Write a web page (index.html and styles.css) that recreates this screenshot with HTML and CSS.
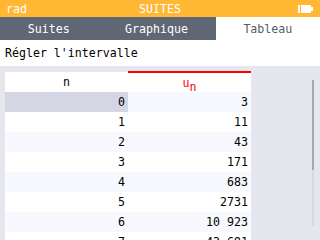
FILE: index.html
```html
<!DOCTYPE html>
<html lang="fr">
<head>
  <meta charset="UTF-8">
  <title>Suites</title>
  <link rel="stylesheet" href="styles.css">
</head>
<body>

  <div class="titlebar">
    <span class="angle">rad</span>
    <span class="apptitle">SUITES</span>
    <svg class="battery" width="16" height="8" viewBox="0 0 16 8">
      <rect x="0" y="0" width="2" height="8" fill="#fff"/>
      <rect x="3" y="0" width="10" height="8" fill="#fff"/>
      <rect x="13" y="2" width="2" height="4" fill="#fff"/>
    </svg>
  </div>

  <div class="tabs">
    <div class="tab">Suites</div>
    <div class="tab">Graphique</div>
    <div class="tab active">Tableau</div>
  </div>

  <div class="interval">Régler l'intervalle</div>

  <div class="wall">
    <table class="values">
      <tr class="head">
        <th>n</th>
        <th class="seq">u<sub>n</sub></th>
      </tr>
      <tr><td class="selected">0</td><td>3</td></tr>
      <tr><td>1</td><td>11</td></tr>
      <tr><td>2</td><td>43</td></tr>
      <tr><td>3</td><td>171</td></tr>
      <tr><td>4</td><td>683</td></tr>
      <tr><td>5</td><td>2731</td></tr>
      <tr><td>6</td><td>10&#8201;923</td></tr>
      <tr><td>7</td><td>43&#8201;691</td></tr>
    </table>
    <div class="scrollbar">
      <div class="thumb"></div>
    </div>
  </div>

</body>
</html>
```

FILE: styles.css
```css
body {
  margin: 0;
  width: 320px;
  height: 240px;
  overflow: hidden;
  font-family: "DejaVu Sans Mono", monospace;
  font-size: 11.6px;
  background-color: #e5e6ee;
}
/* Title bar */
.titlebar {
  height: 17px;
  background-color: #ffb734;
  color: #fff;
  display: flex;
  align-items: center;
  justify-content: space-between;
  padding: 0 6px;
  position: relative;
}
.apptitle {
  position: absolute;
  left: 0;
  right: 0;
  text-align: center;
}
.battery {
  display: block;
}
/* Tabs */
.tabs {
  display: flex;
  height: 23px;
  background-color: #5f6775;
}
.tab {
  flex: 1 1 auto;
  display: flex;
  align-items: center;
  justify-content: center;
  color: #fff;
}
.tab.active {
  background-color: #fff;
  color: #545c68;
}
/* Interval button row */
.interval {
  height: 26px;
  background-color: #fff;
  color: #000;
  display: flex;
  align-items: center;
  padding-left: 5px;
}
/* Table */
.wall {
  display: flex;
  padding: 5px 0 0 5px;
}
.values {
  border-collapse: collapse;
  width: 246px;
}
.values td, .values th {
  width: 123px;
  height: 20px;
  padding: 0 3px 0 0;
  text-align: right;
  font-weight: normal;
  background-color: #f7f9fe;
  color: #000;
  box-sizing: border-box;
}
.values tr:nth-child(odd) td {
  background-color: #fff;
}
.values .head th {
  background-color: #fff;
  text-align: center;
  padding: 0;
}
.values .head th.seq {
  border-top: 2px solid #f00;
  color: #f00;
}
.seq sub {
  font-size: 11.6px;
  vertical-align: -4px;
  line-height: 0;
}
.values td.selected {
  background-color: #d4d7e3;
}
.scrollbar {
  margin: 9px 0 0 61px;
  width: 2px;
  height: 146px;
  background-color: #d8d8e0;
}
.thumb {
  height: 90px;
  background-color: #a8a8ab;
}
```
